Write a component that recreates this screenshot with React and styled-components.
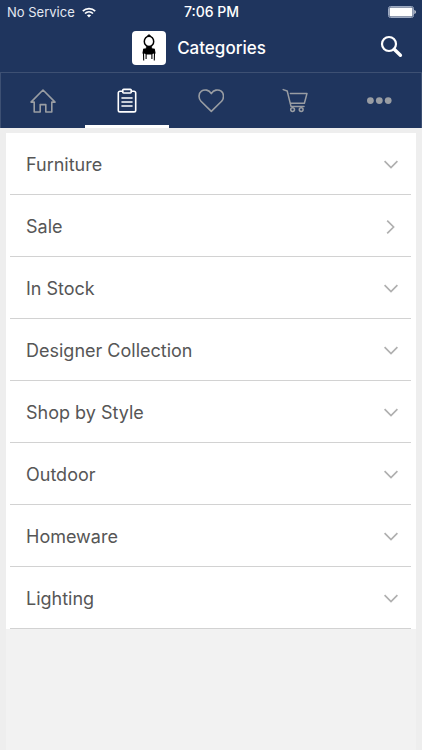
import React, { useState } from 'react';
import styled, { createGlobalStyle } from 'styled-components';

const GlobalStyle = createGlobalStyle`
  * {
    box-sizing: border-box;
  }

  body {
    margin: 0;
    background: #eeeeee;
    color: #565656;
    font-family: Inter, 'Liberation Sans', sans-serif;
  }
`;

const Page = styled.div`
  display: flex;
  flex-direction: column;
  min-height: 100vh;
`;

const Header = styled.header`
  background: #1f355e;
  color: #ffffff;
`;

const StatusBar = styled.div`
  display: grid;
  grid-template-columns: 1fr auto 1fr;
  align-items: center;
  height: 24px;
  padding: 0 6px 0 7px;
  font-size: 13px;
  line-height: 16px;
`;

const Carrier = styled.div`
  display: flex;
  align-items: center;
  gap: 7px;
  color: #e4e9f2;
`;

const Clock = styled.time`
  font-size: 14px;
  font-weight: 500;
`;

const Battery = styled.svg`
  justify-self: end;
`;

const TitleBar = styled.div`
  display: grid;
  grid-template-columns: 1fr auto 1fr;
  align-items: center;
  height: 48px;
  padding: 0 17px;
`;

const Brand = styled.div`
  display: flex;
  grid-column: 2;
  align-items: center;
  gap: 11px;
  padding-right: 24px;
`;

const Logo = styled.span`
  display: flex;
  align-items: center;
  justify-content: center;
  width: 34px;
  height: 34px;
  border-radius: 4px;
  background: #ffffff;
`;

const Title = styled.h1`
  margin: 0;
  font-size: 17px;
  font-weight: 500;
  line-height: 24px;
`;

const SearchButton = styled.button`
  display: flex;
  justify-self: end;
  padding: 2px 2px 6px;
  border: 0;
  background: none;
  color: inherit;
  cursor: pointer;
`;

const Tabs = styled.nav`
  display: flex;
  height: 56px;
  border: 1px solid #3d5073;
  border-bottom: 0;
`;

const Tab = styled.button`
  display: flex;
  flex: 1;
  align-items: center;
  justify-content: center;
  padding: 3px 0 0;
  border: 0;
  border-bottom: 3px solid ${props => (props.$active ? '#ffffff' : 'transparent')};
  background: none;
  color: ${props => (props.$active ? '#ffffff' : '#999da3')};
  cursor: pointer;
`;

const Content = styled.main`
  flex: 1;
  margin: 5px 6px 0;
  background: #f2f2f2;
`;

const CategoryList = styled.ul`
  margin: 0;
  padding: 0 5px 0 4px;
  background: #ffffff;
  list-style: none;
`;

const Category = styled.li`
  border-bottom: 1px solid #d2d2d2;
`;

const CategoryButton = styled.button`
  display: flex;
  align-items: center;
  justify-content: space-between;
  width: 100%;
  padding: 20px 11px 17px 16px;
  border: 0;
  background: none;
  color: inherit;
  font: inherit;
  font-size: 18px;
  line-height: 24px;
  text-align: left;
  cursor: pointer;
`;

const Chevron = styled.svg`
  flex: none;
  transform: ${props => (props.$right ? 'rotate(-90deg)' : 'none')};
`;

const lineProps = {
  fill: 'none',
  stroke: 'currentColor',
  strokeWidth: 1.6,
  strokeLinejoin: 'round',
  strokeLinecap: 'round',
};

const WifiIcon = () => (
  <svg width="14" height="11" viewBox="0 0 14 11" fill="none" stroke="#ffffff" strokeWidth="1.7">
    <path d="M0.8 4.1C4.2 0.7 9.8 0.7 13.2 4.1M3 6.5C5.3 4.3 8.7 4.3 11 6.5" />
    <path d="M7 10.6L4.9 8.3C6.1 7.3 7.9 7.3 9.1 8.3Z" fill="#ffffff" stroke="none" />
  </svg>
);

const BatteryIcon = () => (
  <Battery width="28" height="12" viewBox="0 0 28 12" role="img" aria-label="Battery full">
    <rect x="0.5" y="0.5" width="25" height="11" rx="2" fill="none" stroke="#9daac2" />
    <rect x="1.5" y="1.5" width="23" height="9" rx="1" fill="#ffffff" />
    <path d="M26.5 4C28.1 4.6 28.1 7.4 26.5 8Z" fill="#ffffff" />
  </Battery>
);

const ChairIcon = () => (
  <svg width="14" height="28" viewBox="0 0 14 28" fill="none" stroke="#000000">
    <ellipse cx="7" cy="7.4" rx="4.7" ry="5.2" strokeWidth="1.5" />
    <path d="M5.2 2.2L7 0.6L8.8 2.2Z" fill="#000000" strokeWidth="0.8" />
    <path d="M4.2 12.4H9.8L9.4 15H4.6Z" fill="#000000" strokeWidth="0.6" />
    <path d="M1.2 14.8Q7 13.2 12.8 14.8L13.6 19.6Q11 19.4 9.6 20.4H4.4Q3 19.4 0.4 19.6Z" fill="#000000" stroke="none" />
    <path d="M1.5 19L1.7 26.6M12.5 19L12.3 26.6M4.1 19.8V25M9.9 19.8V25" strokeWidth="1.1" />
  </svg>
);

const SearchIcon = () => (
  <svg width="23" height="23" viewBox="0 0 23 23" fill="none" stroke="currentColor">
    <circle cx="9" cy="9" r="7" strokeWidth="2.2" />
    <path d="M14.2 14.2L20.4 20.2" strokeWidth="3.4" strokeLinecap="round" />
  </svg>
);

const HomeIcon = () => (
  <svg width="26" height="26" viewBox="0 0 26 26" {...lineProps}>
    <path d="M13 2L25 14.1H21.8V24H15.8V16.6H10.2V24H4.2V14.1H1Z" />
  </svg>
);

const ClipboardIcon = () => (
  <svg width="26" height="26" viewBox="0 0 26 26" {...lineProps}>
    <path d="M8.7 3.2H6A1.7 1.7 0 0 0 4.3 4.9V22.2A1.7 1.7 0 0 0 6 23.9H20A1.7 1.7 0 0 0 21.7 22.2V4.9A1.7 1.7 0 0 0 20 3.2H17.3" />
    <rect x="8.7" y="1.4" width="8.6" height="3.6" rx="1" />
    <path d="M8 10H18M8 14H18M8 18H18" />
  </svg>
);

const HeartIcon = () => (
  <svg width="26" height="26" viewBox="0 0 26 26" {...lineProps}>
    <path d="M13.3 23.4L3 13.2C0.2 10.2 0.4 5.6 3.4 3.2C6.6 0.9 11 1.9 13.3 5.6C15.6 1.9 20 0.9 23.2 3.2C26.2 5.6 26.2 10.2 23.6 13.2Z" />
  </svg>
);

const CartIcon = () => (
  <svg width="26" height="26" viewBox="0 0 26 26" {...lineProps} strokeWidth="1.5">
    <path d="M1.2 1.6L5.2 3L9 18.4H22" />
    <path d="M8.4 5.4H25L22.4 15.3H8.6" />
    <circle cx="10.6" cy="21.6" r="1.9" />
    <circle cx="19.2" cy="21.6" r="1.9" />
  </svg>
);

const MoreIcon = () => (
  <svg width="26" height="26" viewBox="0 0 26 26" fill="currentColor">
    <circle cx="4.4" cy="12.6" r="3.4" />
    <circle cx="13.3" cy="12.6" r="3.4" />
    <circle cx="22.2" cy="12.6" r="3.4" />
  </svg>
);

const ChevronIcon = ({ right }) => (
  <Chevron $right={right} width="18" height="18" viewBox="0 0 18 18" fill="none" stroke="#b0b0b0" strokeWidth="1.7">
    <path d="M2.6 5.2L9 11.6L15.4 5.2" />
  </Chevron>
);

const tabs = [
  { id: 'home', label: 'Home', Icon: HomeIcon },
  { id: 'categories', label: 'Categories', Icon: ClipboardIcon },
  { id: 'wishlist', label: 'Wishlist', Icon: HeartIcon },
  { id: 'cart', label: 'Cart', Icon: CartIcon },
  { id: 'more', label: 'More', Icon: MoreIcon },
];

const categories = [
  { name: 'Furniture' },
  { name: 'Sale', link: true },
  { name: 'In Stock' },
  { name: 'Designer Collection' },
  { name: 'Shop by Style' },
  { name: 'Outdoor' },
  { name: 'Homeware' },
  { name: 'Lighting' },
];

const App = () => {
  const [active, setActive] = useState('categories');

  return (
    <Page>
      <GlobalStyle />
      <Header>
        <StatusBar>
          <Carrier>
            No Service
            <WifiIcon />
          </Carrier>
          <Clock>7:06 PM</Clock>
          <BatteryIcon />
        </StatusBar>
        <TitleBar>
          <Brand>
            <Logo>
              <ChairIcon />
            </Logo>
            <Title>Categories</Title>
          </Brand>
          <SearchButton type="button" aria-label="Search">
            <SearchIcon />
          </SearchButton>
        </TitleBar>
        <Tabs>
          {tabs.map(({ id, label, Icon }) => (
            <Tab
              key={id}
              type="button"
              aria-label={label}
              $active={id === active}
              onClick={() => setActive(id)}
            >
              <Icon />
            </Tab>
          ))}
        </Tabs>
      </Header>
      <Content>
        <CategoryList>
          {categories.map(({ name, link }) => (
            <Category key={name}>
              <CategoryButton type="button">
                {name}
                <ChevronIcon right={link} />
              </CategoryButton>
            </Category>
          ))}
        </CategoryList>
      </Content>
    </Page>
  );
};

export default App;
